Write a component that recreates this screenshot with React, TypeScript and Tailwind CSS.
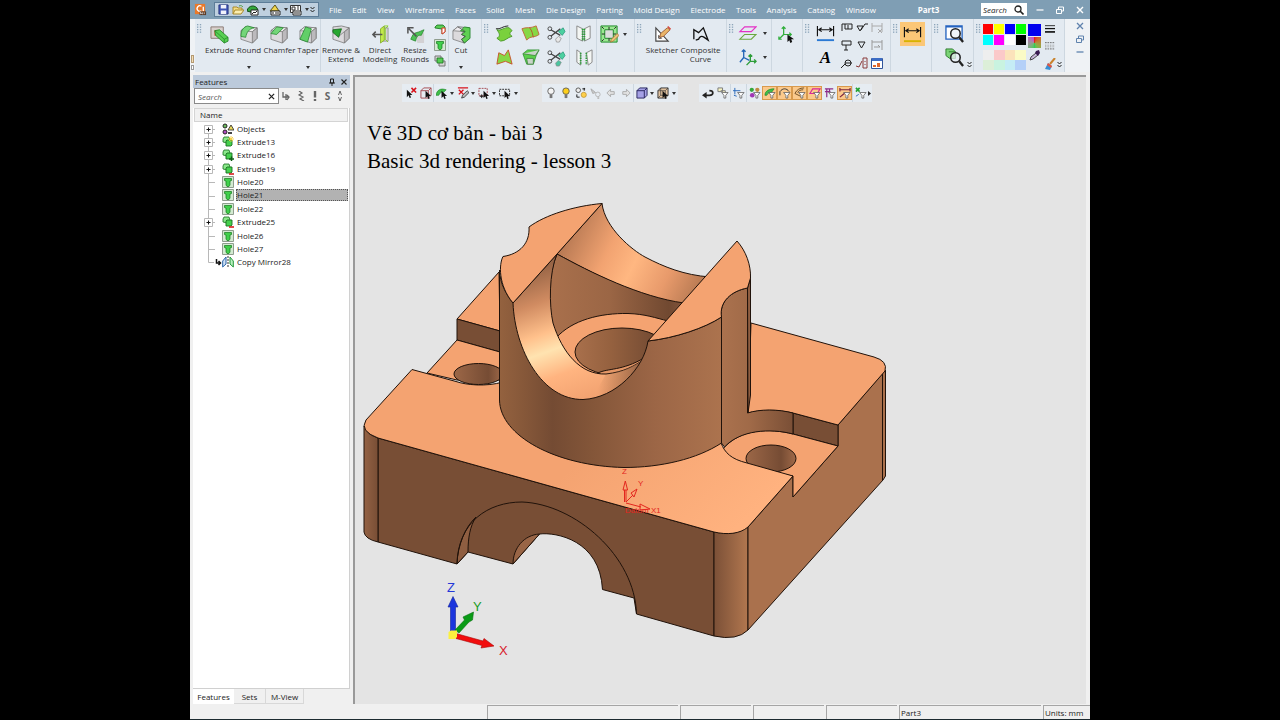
import React from 'react';

interface IconProps {
    box?: number;
    className?: string;
    children: React.ReactNode;
}

const Icon: React.FC<IconProps> = ({ box = 20, className = 'size-[19px]', children }) => (
    <svg viewBox={`0 0 ${box} ${box}`} className={`${className} shrink-0`} fill="none" aria-hidden="true">
        {children}
    </svg>
);

const Arrow = ({ className = 'w-[7px]' }: { className?: string }) => (
    <span className={`${className} flex shrink-0 items-center justify-center`}>
        <svg viewBox="0 0 4 3" className="h-[3px] w-1" aria-hidden="true"><path d="M0 0h4L2 3z" fill="#333" /></svg>
    </span>
);

const Chevrons = () => (
    <svg viewBox="0 0 5 7" className="h-[7px] w-[5px] shrink-0" fill="none" stroke="#222" aria-hidden="true">
        <path d="M.5 1l2 2 2-2M.5 4l2 2 2-2" />
    </svg>
);

const Grip = () => (
    <svg viewBox="0 0 6 12" className="mt-1 ml-[2px] mr-[2px] h-3 w-[5px] shrink-0" fill="#8da5ba" aria-hidden="true">
        {[0, 3, 6, 9].map((y) => (
            <g key={y}><rect x="0" y={y} width="1.6" height="1.6" /><rect x="3.4" y={y} width="1.6" height="1.6" /></g>
        ))}
    </svg>
);

const Divider = () => <span className="w-px shrink-0 self-stretch bg-[#cdd7e0]" />;

const Group = ({ className, children }: { className: string; children: React.ReactNode }) => (
    <div className={`${className} flex shrink-0 border-r border-[#cdd7e0] bg-[#e3eaf1]`}>
        <Grip />
        {children}
    </div>
);

// Grey block that most solid commands start from
const Block = () => (
    <g stroke="#777" strokeWidth=".8" strokeLinejoin="round">
        <path d="M1 6l5-4 12 1v11l-5 5L1 15z" fill="#dcdadd" />
        <path d="M1 6l5-4 12 1-5 4z" fill="#eeecef" />
        <path d="M13 7l5-4v11l-5 5z" fill="#bcbabd" />
    </g>
);

const ExtrudeIcon = () => (
    <Icon>
        <path d="M1 2h13v12H1z" fill="#d8d0cc" stroke="#8b7a74" />
        <path d="M5 6h5v5H5z" stroke="#d4684a" />
        <path d="M5 6l5-1 9 8v4l-4 2-9-8z" fill="#58cf52" stroke="#1c7d22" strokeWidth=".8" />
        <path d="M5 6l10 9v4M15 15l4-2" stroke="#1c7d22" strokeWidth=".7" />
    </Icon>
);
const RoundIcon = () => (
    <Icon><Block /><path d="M1 12C1 5 4 2 8 1l7 2C9 4 7 8 6 13z" fill="#74d578" stroke="#23862c" strokeWidth=".8" /></Icon>
);
const ChamferIcon = () => (
    <Icon><Block /><path d="M1 9l6-7 7 1-7 7z" fill="#74d578" stroke="#23862c" strokeWidth=".8" /></Icon>
);
const TaperIcon = () => (
    <Icon><Block /><path d="M1 15L7 2l6 2-4 14z" fill="#62cf68" stroke="#23862c" strokeWidth=".8" /></Icon>
);
const RemoveIcon = () => (
    <Icon><Block /><path d="M1 2l9-1 8 2-5 4-6 5-6-5z" fill="#d9d7da" stroke="#777" strokeWidth=".8" /><path d="M1 5l9-1-3 9-6-5z" fill="#27a62f" stroke="#12631a" strokeWidth=".8" /></Icon>
);
const DirectIcon = () => (
    <Icon>
        <path d="M12 3h6v14h-6z" fill="#d4d2d4" stroke="#888" strokeWidth=".8" />
        <path d="M10 4l4-3v15l-4 3z" fill="#c2ea4a" stroke="#7aa81c" strokeWidth=".8" />
        <path d="M14 1h4l-3 3v11l3 3" stroke="#8bd12a" />
        <path d="M12 10H2M5 7l-3 3 3 3" stroke="#555" strokeWidth="1.600" />
    </Icon>
);
const ResizeIcon = () => (
    <Icon>
        <path d="M8 8h11v11h-7z" fill="#d3d1d4" />
        <path d="M5 15c2-4 2-6 6-7s5-2 8-3l-3 6c-3-1-5 1-6 6z" fill="#4dc155" stroke="#1c7d22" strokeWidth=".7" />
        <path d="M11 12L3 4M2 9V3h6" stroke="#555" strokeWidth="1.600" />
    </Icon>
);
const CutIcon = () => (
    <Icon>
        <Block />
        <path d="M9 6l4-4 6 1v11l-6 5-3-4 4-3-4-2 4-3z" fill="#5fd052" stroke="#1c7d22" strokeWidth=".8" />
        <path d="M6 2l7 4-3 4 4 2-4 3 3 4" stroke="#555" strokeWidth=".8" />
    </Icon>
);

const HoleIcon = ({ className = 'size-3' }: { className?: string }) => (
    <Icon box={12} className={className}>
        <path d="M.5.5h11v11H.5z" fill="#d3ead1" stroke="#8f9d8e" />
        <path d="M2.500 2.500h7v2L8 5v4L7 10.500H5L4 9V5l-1.500-.5z" fill="#3fd04a" stroke="#15771c" strokeWidth=".7" />
    </Icon>
);
const PipeIcon = () => (
    <Icon box={12} className="size-3">
        <path d="M1 4l2-2h6l2 2v5l-3 2V6L1 5z" fill="#58cd55" stroke="#166e1d" strokeWidth=".8" />
        <path d="M8 5h3v4l-3 2z" fill="#fff" stroke="#e03a26" />
    </Icon>
);
const CopiesIcon = () => (
    <Icon box={12} className="size-3">
        <path d="M1 1h6v5H1zM5 6h6v5H5z" fill="#d6d6d6" stroke="#777" />
        <path d="M3 3h6v5H3z" fill="#58cd55" stroke="#166e1d" strokeWidth=".8" />
    </Icon>
);

const SurfaceA = () => (
    <Icon><path d="M2 6c4 2 7-3 13-2l3 3c-3 2-3 4 0 6-5 1-7 5-12 5l-4-3c4-2 3-5 0-9z" fill="#7ad13d" stroke="#4c9a2a" /><path d="M1 5c5 1 7-3 13-3" stroke="#222" /></Icon>
);
const SurfaceB = () => (
    <Icon><path d="M1 5c4-2 9 0 15-3l3 9c-5 4-9 1-13 6z" fill="#86d845" stroke="#c06a3c" /><path d="M9 4c3 3 3 7 4 10" stroke="#b5542c" /></Icon>
);
const SurfaceC = () => (
    <Icon><path d="M4 5l6 3 4-6 4 15-7-3-9 3z" fill="#86d845" stroke="#c8542c" /></Icon>
);
const SurfaceD = () => (
    <Icon><path d="M2 6l5-4h12l-3 6-3 9H6z" fill="#5bd04c" stroke="#2b8d30" strokeWidth=".8" /><path d="M2 6l13 2 4-6M6 11h7v6H7z" fill="#c9d4c9" stroke="#3a7d3a" strokeWidth=".8" /></Icon>
);
const TrimIcon = ({ drop }: { drop: string }) => (
    <Icon>
        <path d="M4 6l10 6M4 13L14 5" stroke="#444" strokeWidth="1.400" />
        <circle cx="3" cy="5" r="2" stroke="#444" /><circle cx="3" cy="14" r="2" stroke="#444" />
        <path d="M12 8l5-4 2 4-3 4z" fill="#4cd0a0" stroke="#1f8f72" strokeWidth=".7" />
        <path d="M9 16l3-3 3 2-2 4h-3z" fill={drop} stroke="#888" strokeWidth=".7" />
    </Icon>
);
const StitchIcon = ({ gap = 0 }: { gap?: number }) => (
    <Icon>
        <path d={`M${9 - gap} 5L3 2v13l${6 - gap} 3zM${11 + gap} 5l6-3v13l-${6 - gap} 3z`} fill="#f4f6f4" stroke="#888" />
        <path d={`M${9 - gap} 5v13M${11 + gap} 5v13`} stroke="#2c9d38" strokeWidth="1.800" strokeDasharray="1.500 1" />
    </Icon>
);
const PatchIcon = () => (
    <Icon>
        <path d="M1 1h17v17H1z" fill="#9be892" stroke="#1e8a28" /><path d="M5 5h9v9H5z" fill="#dcdcdc" stroke="#1e8a28" />
        <path d="M9.500 2v3M9.500 14v3M2 9.500h3M14 9.500h3M2 2l2 2M17 2l-2 2M2 17l2-2" stroke="#222" />
        <path d="M11 18l1-3 6-6 2 2-6 6z" fill="#ecc27a" stroke="#a5662a" strokeWidth=".7" />
    </Icon>
);
const SketcherIcon = () => (
    <Icon>
        <path d="M3 3v14h13z" fill="#fff" stroke="#444" strokeWidth="1.200" /><path d="M6 11v3h3z" stroke="#444" />
        <path d="M7 13l1-4 7-6 3 2-7 7z" fill="#e9b56a" stroke="#8d4a26" strokeWidth=".8" /><path d="M15 2l3 3 1-1-3-3z" fill="#d8453b" />
    </Icon>
);
const CompositeIcon = () => (
    <Icon><path d="M3 15V5l5 3 5-5 5 13-4-3c-3-2-5-1-6 2l-3 1" stroke="#111" strokeWidth="1.400" /></Icon>
);
const PlanesIcon = () => (
    <Icon><path d="M7 3h12l-5 5H2z" stroke="#e332c5" strokeWidth="1.200" /><path d="M7 11h12l-5 5H2z" stroke="#6aa83e" strokeWidth="1.200" /></Icon>
);
const AxesIcon = () => (
    <Icon>
        <path d="M6 10V2M6 10l6 3M6 10l-4 5M4 4l2-2 2 2" stroke="#2466b8" strokeWidth="1.400" />
        <path d="M13 14V7M13 14h6M13 14l-4 4M11 9l2-2 2 2M17 12l2 2-2 2" stroke="#2c9d38" strokeWidth="1.400" />
    </Icon>
);
const PickAxisIcon = () => (
    <Icon>
        <path d="M7 10V2M7 10h8M7 10l-5 5M5 4l2-2 2 2M13 8l2 2-2 2M2 12v3h3" stroke="#2fae3a" strokeWidth="1.300" />
        <path d="M11 10v8l2-2 1 3 2-1-1-3h3z" fill="#111" />
    </Icon>
);
const DimensionIcon = ({ bar = '#2b79d4' }: { bar?: string }) => (
    <Icon>
        <path d="M1.500 2v11M18.500 2v11M3 6h14M6 4L3 6l3 2M14 4l3 2-3 2" stroke="#111" strokeWidth="1.200" />
        <path d="M1 16h18v2H1z" fill={bar} />
    </Icon>
);

const smallAnnotations = [
    <path key="0" d="M1 9V2h10v5H4V2M7 3v4" stroke="#222" />,
    <path key="1" d="M1 4h6L4 9 1 4M5 8l4-6h3" stroke="#222" />,
    <path key="2" d="M1 1v9M11 1v9M1 4h10M7 7l4 4M11 7l-4 4" stroke="#aaa" />,
    <path key="3" d="M1 2h9v4H1zM5 6v5M3 11h4" stroke="#222" />,
    <path key="4" d="M2 3h7L5.500 9z" stroke="#222" />,
    <path key="5" d="M1 1v10M11 1v10M1 3h10M3 8h6l-2-2" stroke="#999" />,
    <path key="6" d="M0 11l4-4M4 6h7M7 3a3 3 0 110 6 3 3 0 010-6z" stroke="#222" />,
    <path key="7" d="M0 9l3 1 3-6M7 1h4v10H7zM9 4v1M9 7v1" stroke="#8a3a3a" />,
    <g key="8"><path d="M.5 1.500h11v10H.5z" fill="#fff" stroke="#31559b" /><path d="M1 1h10v3H1z" fill="#3c6cc4" /><path d="M2 8h3v2H2zM6 6h3v4H6z" fill="#e0672d" /></g>,
];

const LensIcon = ({ back }: { back: React.ReactNode }) => (
    <Icon>{back}<circle cx="11" cy="10" r="5" fill="#e9f0f5" fillOpacity=".75" stroke="#222" strokeWidth="1.600" /><path d="M15 14l4 5" stroke="#222" strokeWidth="2.400" /></Icon>
);

interface CommandProps {
    className: string;
    lines: string[];
    icon: React.ReactNode;
    more?: boolean;
}

const Command: React.FC<CommandProps> = ({ className, lines, icon, more }) => (
    <button type="button" className={`${className} flex shrink-0 flex-col items-center pt-[6px] whitespace-nowrap`}>
        <span className="mb-px">{icon}</span>
        {lines.map((line) => <span key={line} className="leading-[9px]">{line}</span>)}
        {more && <span className="mt-auto mb-[3px]"><Arrow /></span>}
    </button>
);

const IconButton = ({ label, className, children }: { label: string; className?: string; children: React.ReactNode }) => (
    <button type="button" aria-label={label} className={`${className ?? ''} flex shrink-0 items-center justify-center`}>{children}</button>
);

const menus = ['File', 'Edit', 'View', 'Wireframe', 'Faces', 'Solid', 'Mesh', 'Die Design', 'Parting', 'Mold Design', 'Electrode', 'Tools', 'Analysis', 'Catalog', 'Window'];

const TitleBar = () => (
    <header className="flex h-[19px] shrink-0 items-center bg-[#7f9eb4] text-white">
        <Icon box={14} className="ml-1 size-[13px]">
            <path d="M1 1h11v11H1z" fill="#e8792a" />
            <path d="M8 3.500a3 3 0 100 5M10 4v5" stroke="#fff" strokeWidth="1.400" />
            <path d="M6 9h7v4H6z" fill="#5b3a26" /><path d="M7 12v-2l2 2v-2M11 10v2" stroke="#fff" strokeWidth=".7" />
        </Icon>
        <div className="ml-[7px] flex h-[15px] w-[105px] shrink-0 items-center border border-[#5d7d98] bg-[#bfd0df] pl-[1px]">
            <IconButton label="Save" className="w-[14px]">
                <Icon box={12} className="size-[11px]"><path d="M1 1h10v10H1z" fill="#3f55b5" stroke="#26347c" /><path d="M3 1h6v4H3zM3 7h6v4H3z" fill="#f0f2fa" /></Icon>
            </IconButton>
            <IconButton label="Open" className="w-[15px]">
                <Icon box={12} className="size-3"><path d="M1 10V3h4l1 1h4v2" fill="#f5dc83" stroke="#a98a2d" /><path d="M1 10l2-4h9l-3 4z" fill="#fbeeb0" stroke="#a98a2d" /><path d="M7 2c2-1 3 0 4 1" stroke="#4b9b3a" /></Icon>
            </IconButton>
            <IconButton label="New part" className="w-[15px]">
                <Icon box={12} className="size-3"><path d="M0 7c1-6 9-7 11-1L7 9z" fill="#35a83b" stroke="#154d19" /><path d="M4 6h7v5H4z" fill="#fff" stroke="#222" /><path d="M5 10l2-2 1 1 2-2" stroke="#222" /></Icon>
            </IconButton>
            <Arrow />
            <IconButton label="New assembly" className="w-[15px]">
                <Icon box={12} className="size-3"><path d="M1 7l5-6 4 6z" fill="#f0d54c" stroke="#5d5216" /><path d="M2 7h9v4H2z" fill="#fff" stroke="#222" /><path d="M4 10V8M7 10V8M9 10V8" stroke="#222" /></Icon>
            </IconButton>
            <Arrow />
            <IconButton label="New drawing" className="w-[14px]">
                <Icon box={12} className="size-3"><path d="M.5 1.500h10v7H.5z" fill="#fff" stroke="#333" /><path d="M2 3h3v3H2zM7 3h2M7 5h2" stroke="#333" /><path d="M3 7h8v4H3z" fill="#fff" stroke="#222" /><path d="M5 10V8M7 10V8M9 10V8" stroke="#222" /></Icon>
            </IconButton>
            <Arrow />
            <Chevrons />
        </div>
        <nav className="ml-[10px] flex w-[547px] justify-between whitespace-nowrap">
            {menus.map((menu) => <button type="button" key={menu}>{menu}</button>)}
        </nav>
        <h1 className="flex-1 text-center font-bold">Part3</h1>
        <label className="mr-[9px] flex h-[13px] w-[46px] shrink-0 items-center bg-white pl-[2px]">
            <input aria-label="Search" placeholder="Search" className="w-[31px] min-w-0 italic outline-none placeholder:text-[#222]" />
            <Icon box={10} className="size-[10px]"><circle cx="4" cy="4" r="3" stroke="#222" strokeWidth="1.300" /><path d="M6 6l3.500 3.500" stroke="#222" strokeWidth="1.600" /></Icon>
        </label>
        <div className="flex gap-[12px] pr-[6px]">
            <IconButton label="Minimize"><Icon box={8} className="size-2"><path d="M.5 4h7" stroke="#fff" strokeWidth="1.200" /></Icon></IconButton>
            <IconButton label="Restore"><Icon box={8} className="size-2"><path d="M.5 3.500h5v4h-5zM2.500 3V1h5v4H6" stroke="#fff" /></Icon></IconButton>
            <IconButton label="Close"><Icon box={8} className="size-2"><path d="M1 1l6 6M7 1L1 7" stroke="#fff" strokeWidth="1.400" /></Icon></IconButton>
        </div>
    </header>
);

const strong = ['bg-[#ff0000]', 'bg-[#ffff00]', 'bg-[#0000ff]', 'bg-[#00ff00]', 'bg-[#00ffff]', 'bg-[#ff00ff]', 'bg-[#ffffff]', 'bg-[#000000]'];
const pale = ['bg-[#eeeeee]', 'bg-[#fbc9c9]', 'bg-[#fbe3bb]', 'bg-[#fbfbc6]', 'bg-[#dcefd8]', 'bg-[#c9f3e0]', 'bg-[#c5ecf5]', 'bg-[#b4d0f8]'];

const Ribbon = () => (
    <div className="flex h-[53px] shrink-0 bg-[#eff2f5] text-[#333]">
        <div className="flex w-[5px] shrink-0 flex-col justify-end gap-[2px] pb-[2px] pl-[1px]">
            <span className="h-2 w-[3px] border border-[#b59a72] bg-[#f3dfb8]" />
            <span className="h-[5px] w-[3px] border border-[#999] bg-white" />
        </div>
        <Group className="w-[287px]">
            <Command className="w-[31px]" lines={['Extrude']} icon={<ExtrudeIcon />} />
            <Command className="w-[28px]" lines={['Round']} icon={<RoundIcon />} more />
            <Command className="w-[33px]" lines={['Chamfer']} icon={<ChamferIcon />} />
            <Command className="w-[24px]" lines={['Taper']} icon={<TaperIcon />} more />
            <Divider />
            <Command className="w-[40px]" lines={['Remove &', 'Extend']} icon={<RemoveIcon />} />
            <Command className="w-[38px]" lines={['Direct', 'Modeling']} icon={<DirectIcon />} />
            <Command className="w-[32px]" lines={['Resize', 'Rounds']} icon={<ResizeIcon />} />
            <div className="flex w-[17px] shrink-0 flex-col items-center gap-1 pt-1">
                <IconButton label="Pipe"><PipeIcon /></IconButton>
                <IconButton label="Hole"><HoleIcon /></IconButton>
                <IconButton label="Copies"><CopiesIcon /></IconButton>
            </div>
            <Divider />
            <Command className="w-[24px]" lines={['Cut']} icon={<CutIcon />} more />
        </Group>
        <Group className="w-[153px]">
            <div className="grid w-[78px] shrink-0 grid-cols-3 place-items-center py-[2px]">
                <IconButton label="Sweep"><SurfaceA /></IconButton>
                <IconButton label="Blend"><SurfaceB /></IconButton>
                <IconButton label="Trim"><TrimIcon drop="#e8e8e8" /></IconButton>
                <IconButton label="Bounded face"><SurfaceC /></IconButton>
                <IconButton label="Loft"><SurfaceD /></IconButton>
                <IconButton label="Split"><TrimIcon drop="#4ac5a0" /></IconButton>
            </div>
            <Divider />
            <div className="grid w-[26px] shrink-0 place-items-center py-[2px]">
                <IconButton label="Stitch"><StitchIcon /></IconButton>
                <IconButton label="Unstitch"><StitchIcon gap={2} /></IconButton>
            </div>
            <Divider />
            <div className="flex h-[31px] items-center pl-[3px]">
                <IconButton label="Patch"><PatchIcon /></IconButton>
                <Arrow className="w-3" />
            </div>
        </Group>
        <Group className="w-[92px]">
            <Command className="w-[36px]" lines={['Sketcher']} icon={<SketcherIcon />} />
            <Command className="w-[41px]" lines={['Composite', 'Curve']} icon={<CompositeIcon />} />
        </Group>
        <Group className="w-[76px]">
            <div className="grid w-[35px] shrink-0 grid-cols-[23px_12px] place-items-center py-[2px]">
                <IconButton label="Planes"><PlanesIcon /></IconButton><Arrow />
                <IconButton label="Axes"><AxesIcon /></IconButton><Arrow />
            </div>
            <Divider />
            <IconButton label="Pick axis" className="h-[31px] w-[28px]"><PickAxisIcon /></IconButton>
        </Group>
        <Group className="w-[88px]">
            <div className="grid w-[27px] shrink-0 place-items-center py-[2px]">
                <IconButton label="Dimension"><DimensionIcon /></IconButton>
                <button type="button" aria-label="Text" className="font-['Liberation_Serif',serif] text-[17px] leading-[18px] font-bold text-black italic">A</button>
            </div>
            <div className="grid w-[45px] shrink-0 grid-cols-3 place-items-center">
                {smallAnnotations.map((shape, i) => (
                    <IconButton key={i} label={`Annotation ${i + 1}`}><Icon box={12} className="size-3">{shape}</Icon></IconButton>
                ))}
            </div>
        </Group>
        <Group className="w-[41px]">
            <IconButton label="Measure" className="mt-[3px] h-6 w-[25px] bg-[#fbc777]"><DimensionIcon bar="#d8b300" /></IconButton>
        </Group>
        <Group className="w-[42px]">
            <div className="grid w-[26px] shrink-0 place-items-center py-[2px]">
                <IconButton label="Zoom window"><LensIcon back={<path d="M1 2h17v14H1zM1 3h17" fill="#fff" stroke="#2463c0" strokeWidth="1.400" />} /></IconButton>
                <IconButton label="Zoom part"><LensIcon back={<path d="M1 1h7l3 3v7H5L1 8zM4 4h7" fill="#7bd477" stroke="#2f7d2f" />} /></IconButton>
            </div>
            <span className="mt-auto mb-1"><Chevrons /></span>
        </Group>
        <Group className="w-[91px]">
            <div className="flex w-[43px] shrink-0 flex-col gap-[5px] pt-[5px]">
                <div className="grid grid-cols-4 gap-px">
                    {strong.map((c) => <button type="button" key={c} aria-label="Colour" className={`${c} h-[10px]`} />)}
                </div>
                <div className="grid grid-cols-4">
                    {pale.map((c) => <button type="button" key={c} aria-label="Colour" className={`${c} h-[10px]`} />)}
                </div>
            </div>
            <div className="flex w-[17px] shrink-0 flex-col items-center gap-px pt-[5px]">
                <button type="button" aria-label="Current colour" className="h-3 w-[13px] bg-[#0000ee]" />
                <button type="button" aria-label="Colour wheel" className="h-[11px] w-[13px] bg-conic from-[#e02222] via-[#33cc55] to-[#cc33cc]" />
                <IconButton label="Pick colour"><Icon box={12} className="size-3"><path d="M1 11l1-3 5-4 2 2-5 4z" fill="#c9b9dc" stroke="#444" /><path d="M7 2l3-1 1 3-2 3-3-3z" fill="#3b1c52" /></Icon></IconButton>
            </div>
            <div className="flex w-[14px] shrink-0 flex-col items-center gap-[7px] pt-[5px]">
                <IconButton label="Line width"><Icon box={12} className="h-[10px] w-3"><path d="M0 2h12" stroke="#111" /><path d="M0 5.500h12" stroke="#111" strokeWidth="1.500" /><path d="M0 9.500h12" stroke="#111" strokeWidth="2" /></Icon></IconButton>
                <IconButton label="Line style"><Icon box={12} className="h-[10px] w-3"><path d="M0 2h12M0 9.500h12" stroke="#555" strokeDasharray="2 1" /><path d="M0 5h12M0 7h12" stroke="#888" strokeDasharray="1 1" /></Icon></IconButton>
                <IconButton label="Brush"><Icon box={12} className="size-3"><path d="M11 0L6 6" stroke="#c9832e" strokeWidth="2" /><path d="M4 5l4 3-2 4-5-1z" fill="#3a8fd4" /><path d="M4 5l4 3-1 2-4-3z" fill="#e9553f" /></Icon></IconButton>
            </div>
            <span className="mt-auto mb-1"><Chevrons /></span>
        </Group>
        <div className="ml-auto flex flex-col gap-[5px] pt-[3px] pr-[6px]">
            <IconButton label="Close document"><Icon box={8} className="size-2"><path d="M1 1l6 6M7 1L1 7" stroke="#5f82ad" strokeWidth="1.300" /></Icon></IconButton>
            <IconButton label="Restore document"><Icon box={8} className="size-2"><path d="M.5 3.500h5v4h-5zM2.500 3V1h5v4H6" stroke="#5f82ad" /></Icon></IconButton>
            <IconButton label="Minimize document"><Icon box={8} className="size-2"><path d="M.5 4h7" stroke="#5f82ad" strokeWidth="1.300" /></Icon></IconButton>
        </div>
    </div>
);

type NodeKind = 'objects' | 'new' | 'add' | 'cut' | 'hole' | 'mirror';

const tree: { name: string; kind: NodeKind; branch?: boolean }[] = [
    { name: 'Objects', kind: 'objects', branch: true },
    { name: 'Extrude13', kind: 'new', branch: true },
    { name: 'Extrude16', kind: 'add', branch: true },
    { name: 'Extrude19', kind: 'cut', branch: true },
    { name: 'Hole20', kind: 'hole' },
    { name: 'Hole21', kind: 'hole' },
    { name: 'Hole22', kind: 'hole' },
    { name: 'Extrude25', kind: 'cut', branch: true },
    { name: 'Hole26', kind: 'hole' },
    { name: 'Hole27', kind: 'hole' },
    { name: 'Copy Mirror28', kind: 'mirror' },
];

const NodeIcon = ({ kind }: { kind: NodeKind }) => {
    if (kind === 'hole') return <HoleIcon />;
    if (kind === 'objects') {
        return (
            <Icon box={12} className="size-3">
                <circle cx="3" cy="3" r="2" fill="#6dbb5f" stroke="#222" /><circle cx="3" cy="9" r="2" fill="#b04ac2" stroke="#222" />
                <path d="M6 7l3-5 3 5z" fill="#e9d75b" stroke="#222" strokeWidth=".8" /><path d="M6 9h4v2H6z" fill="#444" />
            </Icon>
        );
    }
    if (kind === 'mirror') {
        return (
            <Icon box={12} className="size-3">
                <path d="M4 1L.7 5v6L4 8z" fill="#cfe0f4" stroke="#2864a8" /><path d="M6 0v12" stroke="#333" strokeDasharray="2 1" /><path d="M8 1l3.300 4v6L8 8z" fill="#b9efc0" stroke="#23973a" />
            </Icon>
        );
    }
    return (
        <Icon box={12} className="size-3">
            <path d="M1 3l1-2h5l1 3v3H5L1 6z" fill="#8be88b" stroke="#187020" strokeWidth=".8" />
            <path d="M4 5l1-1h5v5l-1 1H4z" fill="#46d04e" stroke="#187020" strokeWidth=".9" />
            {kind === 'new' && <path d="M9 0v6M6 3h6M7 1l4 4M11 1L7 5" stroke="#f6cf45" strokeWidth=".9" />}
            {kind === 'add' && <path d="M7 10h5M9.500 7.500v4.500" stroke="#0c5c13" strokeWidth="1.500" />}
            {kind === 'cut' && <path d="M7 11h5" stroke="#d91e1e" strokeWidth="1.600" />}
        </Icon>
    );
};

const Features = () => (
    <aside className="ml-[3px] flex w-[157px] shrink-0 flex-col text-[#222]">
        <div className="flex h-[13px] shrink-0 items-center bg-[#bccadb] px-[2px]">
            <h2 className="flex-1">Features</h2>
            <IconButton label="Pin" className="mr-1"><Icon box={8} className="size-2"><path d="M2.500 1h3v4h-3zM1 5h6M4 5v3" stroke="#222" /></Icon></IconButton>
            <IconButton label="Close panel"><Icon box={8} className="size-2"><path d="M1.500 1.500l5 5M6.500 1.500l-5 5" stroke="#222" strokeWidth="1.100" /></Icon></IconButton>
        </div>
        <div className="flex h-4 shrink-0 items-center">
            <label className="ml-px flex h-4 w-[85px] items-center border border-[#8a8a8a] bg-white px-[3px]">
                <input aria-label="Search features" placeholder="Search" className="min-w-0 flex-1 italic outline-none placeholder:text-[#555]" />
                <Icon box={8} className="size-[7px]"><path d="M1 1l6 6M7 1L1 7" stroke="#222" strokeWidth="1.400" /></Icon>
            </label>
            <div className="flex flex-1 items-center justify-around pr-[3px] text-[10px] font-bold text-[#666]">
                <IconButton label="Step in"><Icon box={10} className="size-[10px]"><path d="M2 1v5h6M6 4l2 2-2 3M5 3v6" stroke="#666" strokeWidth="1.300" /></Icon></IconButton>
                <IconButton label="Chain"><Icon box={10} className="size-[10px]"><path d="M3 0l3 2-3 2 4 2-3 2 4 2" stroke="#666" strokeWidth="1.200" /></Icon></IconButton>
                <IconButton label="Warnings"><Icon box={10} className="size-[10px]"><path d="M5 0v6.500M5 8v2" stroke="#666" strokeWidth="2.400" /></Icon></IconButton>
                <button type="button">S</button>
                <IconButton label="Sort"><Icon box={10} className="size-[10px]"><path d="M3.500 4L5 0l1.500 4M3.500 6L5 10l1.500-4" stroke="#666" /></Icon></IconButton>
            </div>
        </div>
        <div className="mt-1 flex flex-1 flex-col border-r border-b border-[#d0d0d0] bg-white">
            <div className="mx-px h-[14px] shrink-0 border border-[#d4d4d4] bg-[#f1f1f1] pl-[5px] leading-3">Name</div>
            <ul className="grid h-[147px] shrink-0 auto-rows-fr">
                {tree.map(({ name, kind, branch }) => (
                    <li key={name} className="flex items-center pl-[9px]">
                        <svg viewBox="0 0 20 14" className="h-[14px] w-5 shrink-0" fill="none" aria-hidden="true">
                            <path d={kind === 'mirror' ? 'M6.500 0v7.500H12' : kind === 'objects' ? 'M6.500 7v7M6.500 7.500H13' : 'M6.500 0v14M6.500 7.500H13'} stroke="#b8b8b8" />
                            {branch && <><path d="M2.500 3.500h8v8h-8z" fill="#fff" stroke="#b8b8b8" /><path d="M4.500 7.500h4M6.500 5.500v4" stroke="#111" /></>}
                            {kind === 'mirror' && <path d="M14.500 4v4H18M16.500 6l2 2-2 2" stroke="#111" strokeWidth="1.500" />}
                        </svg>
                        <NodeIcon kind={kind} />
                        <span className={`mr-px ml-[2px] flex-1 border border-dotted leading-[10px] ${name === 'Hole21' ? 'border-[#555] bg-[#b2b2b2]' : 'border-transparent'}`}>{name}</span>
                    </li>
                ))}
            </ul>
        </div>
        <div className="flex h-[15px] shrink-0">
            <button type="button" className="w-[41px] bg-white">Features</button>
            <button type="button" className="w-8 border-r border-b border-[#d8d8d8]">Sets</button>
            <button type="button" className="w-[38px] border-r border-b border-[#d8d8d8]">M-View</button>
        </div>
    </aside>
);

const Cursor = () => <path d="M6 4v8l2-2 1 3 1.500-.6-1-2.600H12z" fill="#111" />;
const Funnel = () => <path d="M5 6h7L9.500 9v3h-2V9z" fill="#fff" stroke="#555" strokeWidth=".8" />;

const ToolButton = ({ label, on, children }: { label: string; on?: boolean; children: React.ReactNode }) => (
    <button type="button" aria-label={label} className={`flex h-[14px] w-[15px] shrink-0 items-center justify-center ${on ? 'border border-[#d99a4d] bg-[#fbc98c]' : ''}`}>
        <Icon box={13} className="size-3">{children}</Icon>
    </button>
);

const Bar = ({ children }: { children: React.ReactNode }) => (
    <div className="flex h-[18px] shrink-0 items-center bg-[#e6ecf2] px-px">{children}</div>
);

const Bulb = ({ fill }: { fill: string }) => (
    <><circle cx="6.500" cy="4.500" r="3.500" fill={fill} stroke="#555" strokeWidth=".9" /><path d="M5 8h3v4H5z" fill="#777" /></>
);

const ViewTools = () => (
    <div className="flex pl-[47px]">
        <Bar>
            <ToolButton label="Clear selection"><path d="M2 3v8l2-2 1 3 1.500-.6-1-2.600H8z" fill="#111" /><path d="M7 1l5 5M12 1L7 6" stroke="#d8121b" strokeWidth="1.700" /></ToolButton>
            <ToolButton label="Pick body"><path d="M1 4l3-3h8v8l-3 3H1zM1 4h8v8M9 4l3-3" stroke="#a4484e" /><Cursor /></ToolButton>
            <Divider />
            <ToolButton label="Pick face"><path d="M0 9c1-6 5-8 11-6L8 6C5 5 4 7 3 9z" fill="#3fbe4a" stroke="#1e8328" strokeWidth=".7" /><Cursor /></ToolButton><Arrow className="w-[6px]" />
            <ToolButton label="Pick edge"><path d="M1 1h11M2 3l5 5M7 3L2 8" stroke="#d8121b" strokeWidth="1.500" /><path d="M5 12l1-3 5-5 2 2-5 5z" fill="#bbb" stroke="#222" strokeWidth=".8" /></ToolButton><Arrow className="w-[6px]" />
            <ToolButton label="Add by box"><path d="M1 1.500h9v8H1z" stroke="#a4484e" strokeDasharray="2 1" /><path d="M2 10h4M4 8v4" stroke="#111" /><Cursor /></ToolButton><Arrow className="w-[6px]" />
            <ToolButton label="Select by box"><path d="M.5 2.500h11v7H.5z" stroke="#222" strokeDasharray="2 1" /><Cursor /></ToolButton><Arrow />
        </Bar>
        <div className="w-[22px]" />
        <Bar>
            <ToolButton label="Hide"><Bulb fill="#f4f4f4" /></ToolButton>
            <ToolButton label="Show"><Bulb fill="#fdcf1b" /></ToolButton>
            <ToolButton label="Swap"><circle cx="3.500" cy="3.500" r="2.500" fill="#eee" stroke="#555" /><circle cx="9.500" cy="8.500" r="2.800" fill="#fdcf4b" stroke="#b48723" strokeWidth=".7" /><path d="M2 8v3h3M8 2h3M10 1v3" stroke="#111" /></ToolButton>
            <ToolButton label="Hide picked"><path d="M1 2l5 4-3 1z" fill="#ccc" stroke="#aaa" /><circle cx="8.500" cy="8" r="2.500" stroke="#b5b5b5" /><path d="M8 11h2v2H8z" fill="#bbb" /></ToolButton>
            <ToolButton label="Previous view"><path d="M2 6.500l4-4v2.500h4v3H6v2.500z" fill="#e2e2e2" stroke="#aaa" /></ToolButton>
            <ToolButton label="Next view"><path d="M11 6.500l-4-4v2.500H3v3h4v2.500z" fill="#e2e2e2" stroke="#aaa" /></ToolButton>
            <Divider />
            <ToolButton label="Shaded"><path d="M1 4l3-3h8v8l-3 3H1z" fill="#a5a1e6" stroke="#26245c" /><path d="M1 4h8v8M9 4l3-3" stroke="#26245c" /></ToolButton><Arrow className="w-[6px]" />
            <ToolButton label="Display mode"><path d="M1 4l3-3h8v8l-3 3H1z" fill="#e2c3a0" stroke="#333" /><path d="M1 4h8v8M9 4l3-3M4 1v8h8M1 12l3-3" stroke="#333" strokeWidth=".7" /><Cursor /></ToolButton><Arrow />
        </Bar>
        <div className="w-[21px]" />
        <Bar>
            <ToolButton label="Back"><path d="M4 9h4c5 0 5-5 0-5" stroke="#222" strokeWidth="1.800" /><path d="M5 5.500L0 9l5 3.500z" fill="#222" /></ToolButton>
            <ToolButton label="Filter boxes"><path d="M1 1h5v4H1zM4 4h5v3" fill="#f6f3c0" stroke="#777" /><Funnel /></ToolButton>
            <Divider />
            <ToolButton label="Filter points"><path d="M2 1v7M0 4h8M1 9l3 1" stroke="#2466b8" /><Funnel /></ToolButton>
            <Divider />
            <ToolButton label="Filter all"><circle cx="3" cy="3" r="2.300" fill="#35a83b" /><circle cx="9" cy="3" r="2.300" fill="#c08a41" /><circle cx="3.500" cy="9" r="2.500" fill="#a136b5" /><Funnel /></ToolButton>
            <ToolButton label="Filter faces" on><path d="M1 9c0-5 5-7 10-7L8 6C5 6 4 7 3 9z" fill="#3fbe4a" stroke="#1e8328" strokeWidth=".7" /><Funnel /></ToolButton>
            <ToolButton label="Filter edges" on><path d="M1 9V5c3-4 7-4 10 0" stroke="#333" /><Funnel /></ToolButton>
            <ToolButton label="Filter curves" on><path d="M11 1C6 1 3 3 1 7l6 3M10 3C7 3 5 4 4 6" stroke="#6b4a20" /><Funnel /></ToolButton>
            <ToolButton label="Filter planes" on><path d="M4 2h8L9 7H1z" stroke="#d8289a" strokeWidth="1.200" /><Funnel /></ToolButton>
            <ToolButton label="Filter text"><path d="M1 2h9M3 2v9M6 2v4M1 5h6" stroke="#8d2b8a" strokeWidth="1.300" /><Funnel /></ToolButton>
            <ToolButton label="Filter dimensions" on><path d="M1 1v4M12 1v4M1 3h11M1 11l6-5" stroke="#7b2340" strokeWidth="1.300" /><Funnel /></ToolButton>
            <Divider />
            <ToolButton label="Filter custom"><path d="M1 1l4 4M5 1L1 5" stroke="#23a232" strokeWidth="1.800" /><path d="M1 10l3-2" stroke="#2466b8" /><Funnel /></ToolButton>
            <svg viewBox="0 0 3 5" className="h-[5px] w-[3px]" aria-hidden="true"><path d="M0 0l3 2.500L0 5z" fill="#222" /></svg>
        </Bar>
    </div>
);

const FACE = '#f4a371';
const DARK = '#784e35';
const SIDE = '#aa714d';

const Part = () => (
    <svg viewBox="355 195 560 470" className="h-[470px] w-[560px] shrink-0" strokeLinejoin="round" role="img" aria-label="Part3 model">
        <defs>
            <linearGradient id="outer" gradientUnits="userSpaceOnUse" x1="499" y1="0" x2="722" y2="0">
                <stop offset="0" stopColor="#94623f" /><stop offset=".12" stopColor="#855739" /><stop offset=".24" stopColor="#744b33" />
                <stop offset=".42" stopColor="#845639" /><stop offset=".7" stopColor="#9c6646" /><stop offset="1" stopColor="#ac734e" />
            </linearGradient>
            <linearGradient id="bore" gradientUnits="userSpaceOnUse" x1="550" y1="0" x2="682" y2="0">
                <stop offset="0" stopColor="#a9704c" /><stop offset=".45" stopColor="#9b6645" /><stop offset=".9" stopColor="#714931" /><stop offset="1" stopColor="#80533a" />
            </linearGradient>
            <linearGradient id="drill" gradientUnits="userSpaceOnUse" x1="575" y1="0" x2="655" y2="0">
                <stop offset="0" stopColor="#a9704c" /><stop offset=".45" stopColor="#95613f" /><stop offset="1" stopColor="#744b33" />
            </linearGradient>
            <linearGradient id="backSaddle" gradientUnits="userSpaceOnUse" x1="572" y1="228" x2="700" y2="292">
                <stop offset="0" stopColor="#b97a54" /><stop offset=".3" stopColor="#f2a371" /><stop offset=".5" stopColor="#ffb781" /><stop offset=".75" stopColor="#e89a6b" /><stop offset="1" stopColor="#b57851" />
            </linearGradient>
            <linearGradient id="frontSaddle" gradientUnits="userSpaceOnUse" x1="550" y1="258" x2="602" y2="402">
                <stop offset="0" stopColor="#8f5f42" /><stop offset=".25" stopColor="#d08b61" /><stop offset=".45" stopColor="#ffc08b" />
                <stop offset=".57" stopColor="#ffe3b0" /><stop offset=".74" stopColor="#ffb480" /><stop offset="1" stopColor="#ef9e6d" />
            </linearGradient>
            <linearGradient id="saddleEnd" gradientUnits="userSpaceOnUse" x1="598" y1="0" x2="645" y2="0">
                <stop offset="0" stopColor="#96633f" stopOpacity="0" /><stop offset="1" stopColor="#8c5b3f" />
            </linearGradient>
            <linearGradient id="cornerLeft"><stop offset="0" stopColor="#946244" /><stop offset="1" stopColor={DARK} /></linearGradient>
            <linearGradient id="cornerFront"><stop offset="0" stopColor="#7b5037" /><stop offset="1" stopColor="#b2774f" /></linearGradient>
            <linearGradient id="notch" gradientUnits="userSpaceOnUse" x1="721" y1="0" x2="793" y2="0">
                <stop offset="0" stopColor="#ab724e" /><stop offset=".4" stopColor="#a06a48" /><stop offset="1" stopColor="#7a4f36" />
            </linearGradient>
            <linearGradient id="screw"><stop offset="0" stopColor="#9c6747" /><stop offset=".7" stopColor="#764c34" /><stop offset="1" stopColor="#a06a49" /></linearGradient>
            <linearGradient id="topGlow" gradientUnits="userSpaceOnUse" x1="620" y1="420" x2="730" y2="535">
                <stop offset="0" stopColor={FACE} /><stop offset="1" stopColor="#ffb27f" />
            </linearGradient>
        </defs>

        <g stroke="#20120a" strokeWidth="1">
            {/* base block sides */}
            <path d="M378 438V542L457 564L468 552L513 564L539.500 534C556 532 600 540 602.500 589.500L634 598L636.500 614L714 636V532Z" fill={DARK} />
            <path d="M457 564C457.500 546 465 527 476 517C470 526 468 538 468 552Z" fill="#8f5e41" />
            <path d="M513 564C513 548 524 535 539.500 534Z" fill="#996546" />
            <path d="M457 564C458 522 488 502 522 502C575 504 635 556 636.500 614" fill="none" />
            <path d="M364 426V532Q365 539 378 542V438Q366 434 364 426Z" fill="url(#cornerLeft)" />
            <path d="M714 532V636Q737 641 748 630V526Q736 537 714 532Z" fill="url(#cornerFront)" />
            <path d="M748 527L793 476V497L838 446V425L885.500 370V476L883 480L748 630Z" fill={SIDE} />
            <path d="M882.500 374V480" fill="none" />

            {/* pockets */}
            <path d="M499 272L457 319L500 331Z" fill={FACE} />
            <path d="M457 319V340L500 352V331Z" fill={DARK} />
            <path d="M457 340L427 373L457 380H500V352Z" fill={FACE} />
            <path d="M793 413L838 425V446L793 434Z" fill={DARK} />
            <path d="M722 450C740 428 770 428 793 434L838 446L793 497V476L747 468H722Z" fill={FACE} />
            <ellipse cx="771" cy="458.500" rx="25" ry="13.500" fill="url(#screw)" />
            <path d="M751 323L874 357Q888 361 885 371L838 425L793 413C775 409 760 410 748 413Z" fill={FACE} />
            <path d="M366 420L412 369.500L456 381.500C466 385 486 387 503 382L721 443C725 453 731 459 747 463L793 476L748 527C740 534 727 535 714 532L378 438Q359 431 366 420Z" fill="url(#topGlow)" />
            <ellipse cx="478.500" cy="374" rx="24.500" ry="10.500" fill="url(#screw)" />

            {/* inside of the boss */}
            <path d="M602 203.500C605 228 632 250 645 257C664 267 684 275 710 277L682 304C640 298 590 272 557 254Z" fill="url(#backSaddle)" />
            <path d="M557 254C590 272 640 297 684 303L650 345L600 376L556 340C548 315 546 280 557 254Z" fill="url(#bore)" />
            <path d="M556 338C572 320 600 313 628 313.500C645 314 656 318 668 321L650 350L610 380L570 365Z" fill={FACE} />
            <ellipse cx="622" cy="352" rx="47" ry="24" fill="url(#drill)" />
            <path d="M598 373C608 368 622 371 644 358L640 372L610 380Z" fill="#e39666" />
            <path d="M505 303L513 303L557 254C549 273 549 305 553 323C562 352 580 375 606 374C624 372 634 366 643 360L640 372L610 398L575 404L505 402Z" fill="url(#frontSaddle)" />
            <path d="M606 374C624 372 634 366 643 360L640 372L610 402L590 402Z" fill="url(#saddleEnd)" stroke="none" />

            {/* boss */}
            <path d="M499.500 270C500 284 506 294 513 303C515 350 542 400 583 399.500C616 398 644 368 648 341C675 338 705 328 721.500 317V443C697 459 661 467.500 624 467.500C556 466 500 436 499.500 400Z" fill="url(#outer)" />
            <path d="M721.500 317C719 301 732 291 747.500 288V413C760 409 778 409 793 413V434C770 428 740 430 724.500 447L721.500 443Z" fill="url(#notch)" />
            <path d="M747.500 288L750.500 278V395L748 413Z" fill="#8f5e41" />
            <path d="M602 203.500C574 206 545 215 529 227C530 243 520 254 503 256.500C499 264 498 285 513 303L557 254Z" fill={FACE} />
            <path d="M737 241C746 251 751 265 750.500 278L747.500 288C731 291 719 302 721.500 317C705 328 675 338 648 341Z" fill={FACE} />
        </g>

        {/* datum axes */}
        <g stroke="#e3261e" fill="none" strokeWidth="1">
            <path d="M624.500 502V490M626 502V490M623 490L625.300 481L627.600 490ZM626 502L633 495M631 493L637 489L634 497ZM626 503L641 507M640 504L650 509L640 510Z" />
        </g>
        <g fill="#e3261e" className="font-['Liberation_Sans',sans-serif] text-[8px]">
            <text x="622" y="474">Z</text>
            <text x="638" y="486">Y</text>
            <text x="625" y="513">Datum</text>
            <text x="651" y="513">X1</text>
        </g>

        {/* view triad */}
        <g>
            <path d="M450.500 633V607H448L453 596.500L458 607H455.500V633Z" fill="#1b35dd" stroke="#12249a" strokeWidth=".6" />
            <path d="M455 630L464.500 620L463 617L473.500 612L472.500 620L469 622L459 633Z" fill="#0a9b16" stroke="#086e10" strokeWidth=".6" />
            <path d="M456 633.500L483 641L484 638.500L494 646L481 648L482 645.500L456 638.500Z" fill="#f20d0d" stroke="#a80909" strokeWidth=".6" />
            <path d="M448.500 632L451 630.500H457V637L455 639H448.500Z" fill="#fbf13f" />
        </g>
        <g className="font-['Liberation_Sans',sans-serif] text-[13px]">
            <text x="447" y="592" fill="#2438d8">Z</text>
            <text x="473" y="611" fill="#1d9d28">Y</text>
            <text x="499" y="655" fill="#d8202c">X</text>
        </g>
    </svg>
);

const cell = 'h-[14px] shrink-0 border-t border-l border-[#a5a5a5] bg-[#efefef] pl-px leading-[13px]';

const StatusBar = () => (
    <footer className="flex h-[15px] shrink-0 items-end gap-[2px] text-[#222]">
        <div className="w-[295px] shrink-0" />
        <div className={`${cell} flex-1`} />
        <div className={`${cell} w-[71px]`} />
        <div className={`${cell} w-[71px]`} />
        <div className={`${cell} w-[71px]`} />
        <div className={`${cell} w-[142px]`}>Part3</div>
        <div className={`${cell} w-[47px] whitespace-nowrap`}>Units: mm</div>
    </footer>
);

const App: React.FC = () => {
    return (
        <div className="flex min-h-screen flex-col bg-black px-[190px] font-['Open_Sans',sans-serif] text-[8px] leading-[11px]">
            <div className="flex flex-1 flex-col border-b border-[#1c2a30] bg-[#f0f0f0]">
                <TitleBar />
                <Ribbon />
                <div className="flex flex-1 pt-[3px]">
                    <Features />
                    <main className="mr-1 ml-[3px] flex flex-1 flex-col overflow-hidden border-t-2 border-l-2 border-[#999] bg-[#e4e4e4] pt-[7px]">
                        <ViewTools />
                        <div className="mt-[17px] pl-3 font-['Liberation_Serif',serif] text-[21px] leading-7 text-black">
                            <p>Vẽ 3D cơ bản - bài 3</p>
                            <p>Basic 3d rendering - lesson 3</p>
                        </div>
                        <div className="mt-5"><Part /></div>
                    </main>
                </div>
                <StatusBar />
            </div>
        </div>
    );
};

export default App;
